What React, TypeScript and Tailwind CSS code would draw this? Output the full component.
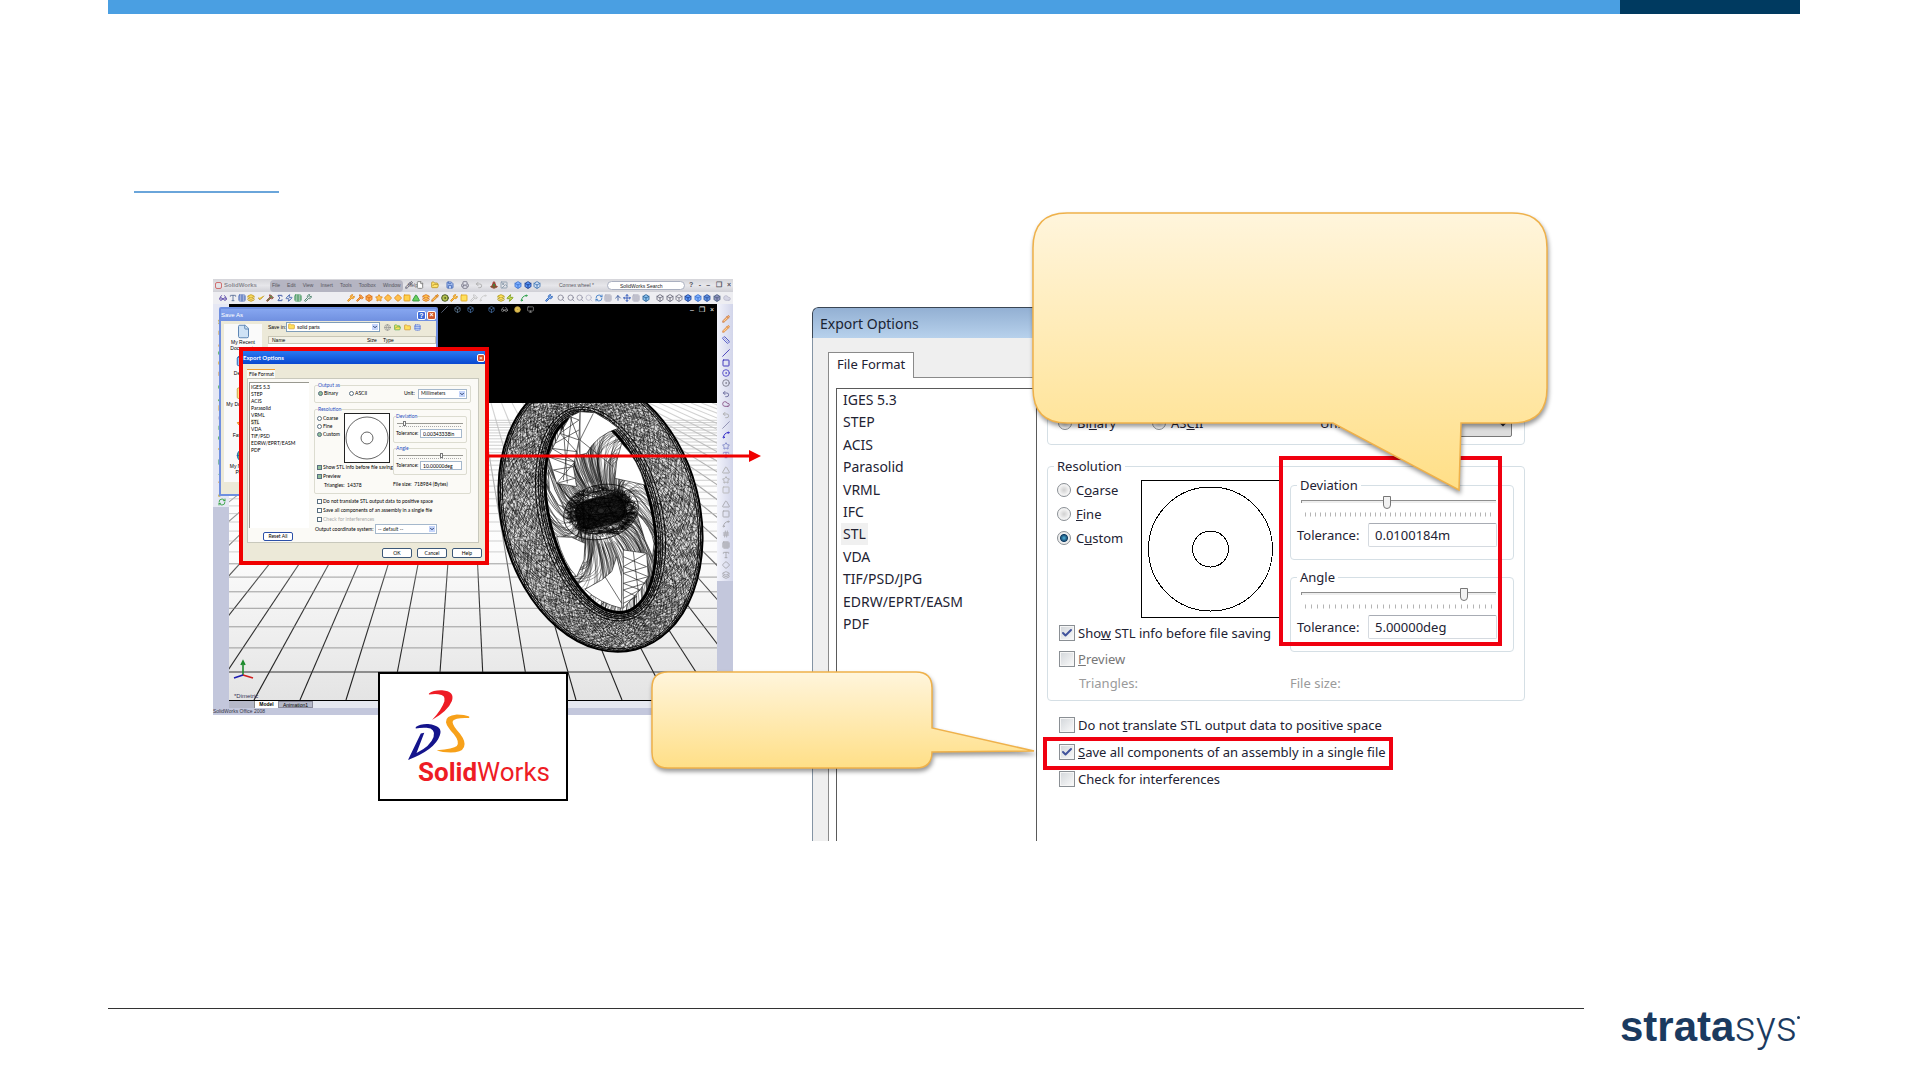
import React from 'react';
import {
  ArrowUp, Box, Check, ChevronDown, Circle, CircleDot, Cloud, Diamond, File, Folder, FolderOpen, Globe, Grid3x3, Glasses,
  Hammer, Hash, Image, Layers, Monitor, Move, Pencil, Printer, RefreshCw, Ruler, Save, Search, Sigma, Slash,
  Spline, Square, Star, Table, TrafficCone, Triangle, Type, Undo2, Wrench, Zap,
} from 'lucide-react';
import type { LucideIcon } from 'lucide-react';

type Tool = { icon: LucideIcon; at: number; color: string; fill?: string };

const formats = ['IGES 5.3', 'STEP', 'ACIS', 'Parasolid', 'VRML', 'IFC', 'STL', 'VDA', 'TIF/PSD/JPG', 'EDRW/EPRT/EASM', 'PDF'];
const oldFormats = ['IGES 5.3', 'STEP', 'ACIS', 'Parasolid', 'VRML', 'STL', 'VDA', 'TIF/PSD', 'EDRW/EPRT/EASM', 'PDF'];
const menus = ['File', 'Edit', 'View', 'Insert', 'Tools', 'Toolbox', 'Window', 'Help'];

const menuTools: Tool[] = [
  { icon: Pencil, at: 192, color: '#555566' },
  { icon: File, at: 203, color: '#777777', fill: '#ffffff' },
  { icon: FolderOpen, at: 218, color: '#b8952a', fill: '#ffe36b' },
  { icon: Save, at: 233, color: '#3b62b5', fill: '#b8cdf5' },
  { icon: Printer, at: 248, color: '#777788', fill: '#e5e5ee' },
  { icon: Undo2, at: 262, color: '#aaaaaa' },
  { icon: TrafficCone, at: 277, color: '#b03030', fill: '#3b8a3b' },
  { icon: Image, at: 287, color: '#8899aa' },
  { icon: Box, at: 301, color: '#3f74d1', fill: '#7eb0ff' },
  { icon: Box, at: 311, color: '#1d3f91', fill: '#5a95f5' },
  { icon: Box, at: 320, color: '#3f74b1', fill: '#cfdff5' },
];

const featureTools: Tool[] = [
  { icon: Glasses, at: 6, color: '#5d4aa8' },
  { icon: Type, at: 16, color: '#5b6f95' },
  { icon: Table, at: 25, color: '#3f62b5' },
  { icon: Layers, at: 34, color: '#c49a1c', fill: '#f5d860' },
  { icon: Check, at: 44, color: '#a47c10', fill: '#ffd94d' },
  { icon: Hammer, at: 53, color: '#a83a3a', fill: '#55a055' },
  { icon: Sigma, at: 63, color: '#29469c' },
  { icon: Zap, at: 72, color: '#3a5caa' },
  { icon: Table, at: 81, color: '#2f8f4a' },
  { icon: Wrench, at: 91, color: '#3d7a60' },
  { icon: Wrench, at: 134, color: '#e08a1c', fill: '#ffc04d' },
  { icon: Hammer, at: 143, color: '#d8731c', fill: '#ffa84d' },
  { icon: Box, at: 152, color: '#d8731c', fill: '#ffa84d' },
  { icon: Star, at: 162, color: '#e08a1c', fill: '#ffc04d' },
  { icon: Diamond, at: 171, color: '#e08a1c', fill: '#ffc04d' },
  { icon: Diamond, at: 181, color: '#e08a1c', fill: '#ffc04d' },
  { icon: Square, at: 190, color: '#e09a1c', fill: '#ffd04d' },
  { icon: Triangle, at: 199, color: '#2c8f3a', fill: '#6ad060' },
  { icon: Layers, at: 209, color: '#d8731c', fill: '#ffc04d' },
  { icon: Pencil, at: 218, color: '#c8701c', fill: '#ffc04d' },
  { icon: CircleDot, at: 228, color: '#3a4a1c', fill: '#b5c050' },
  { icon: Wrench, at: 237, color: '#d8931c', fill: '#ffc04d' },
  { icon: Square, at: 247, color: '#e0a81c', fill: '#ffe05d' },
  { icon: Hammer, at: 257, color: '#c2c2c2' },
  { icon: Spline, at: 266, color: '#cccccc' },
  { icon: Layers, at: 284, color: '#b09a1c', fill: '#ffe05d' },
  { icon: Zap, at: 293, color: '#7a9a1c', fill: '#cce05d' },
  { icon: Spline, at: 307, color: '#209a3c' },
  { icon: Wrench, at: 332, color: '#2b62b5', fill: '#8bb2f0' },
  { icon: Search, at: 344, color: '#888899' },
  { icon: Search, at: 354, color: '#888899' },
  { icon: Search, at: 363, color: '#9999aa' },
  { icon: Search, at: 372, color: '#bbbbcc' },
  { icon: RefreshCw, at: 382, color: '#3a7ac5' },
  { icon: Grid3x3, at: 391, color: '#aaaabb' },
  { icon: ArrowUp, at: 401, color: '#335599' },
  { icon: Move, at: 410, color: '#2b52b5' },
  { icon: Grid3x3, at: 419, color: '#aaaabb' },
  { icon: Box, at: 429, color: '#2b6295', fill: '#8bc2f0' },
  { icon: Box, at: 443, color: '#666677' },
  { icon: Box, at: 453, color: '#666677' },
  { icon: Box, at: 462, color: '#777788' },
  { icon: Box, at: 471, color: '#1d3f91', fill: '#5a95f5' },
  { icon: Box, at: 481, color: '#3f74d1', fill: '#7eb0ff' },
  { icon: Box, at: 490, color: '#2f54a1', fill: '#5e90df' },
  { icon: Box, at: 500, color: '#4f6481', fill: '#8e90bf' },
  { icon: Cloud, at: 510, color: '#bbbbcc', fill: '#d5d5e5' },
];

const leftTools: Tool[] = [
  { icon: Layers, at: 14, color: '#b0921c', fill: '#ffe05d' },
  { icon: Box, at: 25, color: '#c8901c', fill: '#ffe05d' },
  { icon: Pencil, at: 35, color: '#d89a3c' },
  { icon: CircleDot, at: 45, color: '#2c9f3a', fill: '#8ae070' },
  { icon: Circle, at: 55, color: '#d8a01c', fill: '#ffe88d' },
  { icon: Box, at: 66, color: '#c8801c', fill: '#ffc870' },
  { icon: CircleDot, at: 79, color: '#2c9f3a', fill: '#8ae070' },
  { icon: Triangle, at: 90, color: '#2c9f3a', fill: '#e0e070' },
  { icon: Square, at: 100, color: '#d8a01c', fill: '#ffe05d' },
  { icon: Circle, at: 110, color: '#aaaacc' },
  { icon: Box, at: 120, color: '#2c9f3a', fill: '#e0e05d' },
  { icon: Circle, at: 130, color: '#2c9f3a', fill: '#5ac060' },
  { icon: Diamond, at: 141, color: '#d8a01c', fill: '#a0e05d' },
  { icon: Grid3x3, at: 154, color: '#2c8f6a' },
  { icon: Spline, at: 164, color: '#2c9f3a' },
  { icon: Star, at: 175, color: '#d8801c', fill: '#ffe05d' },
  { icon: Pencil, at: 185, color: '#b8a01c', fill: '#ffe05d' },
  { icon: RefreshCw, at: 194, color: '#2c9f3a' },
];

const rightTools: Tool[] = [
  { icon: Pencil, at: 11, color: '#c8703c', fill: '#ffd08d' },
  { icon: Pencil, at: 21, color: '#d8803c', fill: '#ffd08d' },
  { icon: Ruler, at: 32, color: '#4a52c5' },
  { icon: Slash, at: 45, color: '#3a32b5' },
  { icon: Square, at: 55, color: '#2a22b5' },
  { icon: CircleDot, at: 65, color: '#4a42c5' },
  { icon: CircleDot, at: 75, color: '#777788' },
  { icon: Undo2, at: 86, color: '#666699' },
  { icon: Cloud, at: 96, color: '#885588' },
  { icon: Undo2, at: 107, color: '#aaaaaa' },
  { icon: Slash, at: 117, color: '#8888aa' },
  { icon: Spline, at: 127, color: '#2a22c5' },
  { icon: Star, at: 138, color: '#7a82c5' },
  { icon: Type, at: 147, color: '#8a82c5' },
  { icon: Triangle, at: 162, color: '#aaaaaa' },
  { icon: Star, at: 172, color: '#aaaaaa' },
  { icon: Square, at: 182, color: '#b5b5b5' },
  { icon: Triangle, at: 196, color: '#a5a5aa' },
  { icon: Square, at: 206, color: '#a5a5aa' },
  { icon: Spline, at: 216, color: '#a5a5aa' },
  { icon: Hash, at: 226, color: '#a5a5aa' },
  { icon: Grid3x3, at: 237, color: '#a5a5aa' },
  { icon: Type, at: 247, color: '#a5a5aa' },
  { icon: Diamond, at: 257, color: '#a5a5aa' },
  { icon: Layers, at: 267, color: '#a5a5aa' },
];

// floor lines meet in one vanishing point above the viewport
const floorRays = Array.from({ length: 81 }, (_, i) => i - 40);
const floorRows = Array.from({ length: 34 }, (_, n) => 1 / (0.002801 + 0.000203 * n) - 88);

const random = (seed: number) => () => {
  seed = (seed * 16807) % 2147483647;
  return seed / 2147483647;
};

const onTilt = (rx: number, ry: number, t: number) => {
  const a = (-14.5 * Math.PI) / 180;
  const x = rx * Math.cos(t);
  const y = ry * Math.sin(t);
  return [371.5 + x * Math.cos(a) - y * Math.sin(a), 111 + x * Math.sin(a) + y * Math.cos(a)];
};

const tireMesh = (seed: number, lean: number) => {
  const next = random(seed);
  const rings = 15;
  const steps = 210;
  let d = '';
  for (let r = 0; r < rings; r++) {
    const f = r / rings;
    const g = (r + 1.3) / (rings + 0.3);
    for (let s = 0; s < steps; s++) {
      const t = ((s + next() * 0.8) / steps) * Math.PI * 2;
      const u = t + lean * next();
      const [x1, y1] = onTilt(51 + 48 * f, 101 + 39 * f, t);
      const [x2, y2] = onTilt(51 + 48 * g, 101 + 39 * g, u);
      d += `M${x1.toFixed(1)} ${y1.toFixed(1)}L${x2.toFixed(1)} ${y2.toFixed(1)}`;
    }
  }
  return d;
};

const spokeMesh = () => {
  const next = random(23);
  let d = '';
  for (let s = 0; s < 380; s++) {
    const t = next() * Math.PI * 2;
    const [x1, y1] = onTilt(18 + next() * 10, 20 + next() * 14, t);
    const [x2, y2] = onTilt(51, 101, t + (next() - 0.2) * 0.7);
    const [qx, qy] = onTilt(38, 70, t - 0.25);
    d += `M${x1.toFixed(1)} ${y1.toFixed(1)}Q${qx.toFixed(1)} ${qy.toFixed(1)} ${x2.toFixed(1)} ${y2.toFixed(1)}`;
  }
  return d;
};

const hubMesh = () => {
  const next = random(41);
  let d = '';
  for (let s = 0; s < 170; s++) {
    const a = next() * Math.PI * 2;
    const b = a + 1 + next() * 2;
    d += `M${(372 + Math.cos(a) * 36).toFixed(1)} ${(108 + Math.sin(a) * 26).toFixed(1)}L${(372 + Math.cos(b) * 34).toFixed(1)} ${(108 + Math.sin(b) * 24).toFixed(1)}`;
  }
  return d;
};

const Tools: React.FC<{ items: Tool[]; vertical?: boolean; className: string }> = ({ items, vertical, className }) => (
  <svg className={className} aria-hidden="true">
    {items.map(({ icon: Icon, at, color, fill }, i) => (
      <Icon key={i} x={vertical ? 5 : at} y={vertical ? at : 2} width={8} height={8} color={color} fill={fill || 'none'} strokeWidth={2.6} />
    ))}
  </svg>
);

const Wheel: React.FC = () => (
  <svg viewBox="0 0 488 297" className="h-[297px] w-[488px]" aria-hidden="true">
    <defs>
      <linearGradient id="floor" x1="0" y1="0" x2="0" y2="1">
        <stop offset="0" stopColor="#ffffff" />
        <stop offset="0.5" stopColor="#fcfcfc" />
        <stop offset="1" stopColor="#e4e4e4" />
      </linearGradient>
      <linearGradient id="ray" gradientUnits="userSpaceOnUse" x1="0" y1="0" x2="0" y2="297">
        <stop offset="0" stopColor="#d8d8d8" />
        <stop offset="0.45" stopColor="#8a8a8a" />
        <stop offset="0.65" stopColor="#3a3a3a" />
        <stop offset="1" stopColor="#1c1c1c" />
      </linearGradient>
    </defs>
    <rect width="488" height="297" fill="url(#floor)" />
    {floorRays.map(k => (
      <line key={k} x1={241 + k * 10.52} y1="0" x2={255 + k * 46} y2="297" stroke="url(#ray)" strokeWidth="1.1" />
    ))}
    {floorRows.map((y, n) => (
      <path key={n} d={`M0 ${y.toFixed(1)}H488`} stroke={n < 1 ? '#333333' : n < 7 ? '#777777' : '#bbbbbb'} strokeWidth={n < 1 ? 1 : 0.7} />
    ))}
    <g transform="rotate(-14.5 371.5 111)">
      <ellipse cx="371.5" cy="111" rx="99" ry="140" fill="#dcdcdc" stroke="#000000" strokeWidth="2" />
      <ellipse cx="371.5" cy="111" rx="51" ry="101" fill="#ffffff" stroke="#000000" strokeWidth="3" />
      {[54, 56, 58, 61, 95, 97].map(r => (
        <ellipse key={r} cx="371.5" cy="111" rx={r} ry={60 + r * 0.81} fill="none" stroke="#111111" strokeWidth="0.9" />
      ))}
    </g>
    <path d={tireMesh(7, 0.09)} stroke="#000000" strokeWidth="0.45" fill="none" />
    <path d={tireMesh(19, -0.09)} stroke="#000000" strokeWidth="0.45" fill="none" />
    <path d={spokeMesh()} stroke="#000000" strokeWidth="0.35" fill="none" />
    <g transform="translate(251 -13) scale(0.3333)" stroke="#222222" strokeWidth="2" fill="#ffffff">
      <path d="M300 65L345 68L385 92L415 115Q350 135 320 190L300 195Z" />
      <path d="M425 160Q475 210 495 285L450 275L405 265L410 215Z" />
      <path d="M470 370Q515 410 522 460L518 500L495 450Z" />
      <path d="M230 440L275 442L315 460L312 510L290 560Q250 520 230 440Z" />
      <path d="M410 500L425 560V655Q360 640 315 598L365 570L395 545Z" />
      <path d="M205 240L225 300L250 350L235 345L208 300Z" />
      <path d="M270 80L300 65L297 150L280 230L290 290L230 280L205 200L240 130Z" />
      <path d="M430 480L500 490L505 560L480 600L430 655Z" />
      <path
        d="M240 130L297 90L270 80L297 150L240 130L290 185L215 175L283 215L205 200L280 230L220 240L285 265L230 280L285 215M250 110L262 280M275 80L250 270M297 120L225 160M430 500L500 530L430 550L495 580L430 600L470 620L430 640M500 490L430 530L505 560L430 580L480 600L430 625M460 485L475 605M340 70L300 150L400 230M375 560L425 640"
        fill="none"
      />
    </g>
    <path d={hubMesh()} stroke="#000000" strokeWidth="0.4" fill="none" />
    <g transform="rotate(-15 372 109)" fill="none" stroke="#111111" strokeWidth="0.8">
      <ellipse cx="372" cy="109" rx="38" ry="27" />
      <ellipse cx="372" cy="109" rx="31" ry="21" />
      <rect x="346" y="94" width="51" height="29" rx="12" fill="#000000" fillOpacity="0.85" />
    </g>
    <g strokeWidth="1.6" fill="none">
      <path d="M14 272V259M12 262L14 258L16 262" stroke="#1c8a2c" />
      <path d="M14 272L24 275" stroke="#d02020" />
      <path d="M14 272L5 275" stroke="#1c1cb0" />
    </g>
  </svg>
);

const OldSelect: React.FC<{ id: string; value: string; className: string }> = ({ id, value, className }) => (
  <span className={`relative ${className}`}>
    <select id={id} className="block h-[10px] w-full appearance-none border border-[#a5b8cc] bg-white pl-[2px] text-[#222222]"><option>{value}</option></select>
    <ChevronDown size={6} color="#2a4070" strokeWidth={4} className="pointer-events-none absolute top-[2px] right-[2px] bg-[#c5d5fb]" />
  </span>
);

const OldSlider: React.FC<{ title: string; value: string; pos: number }> = ({ title, value, pos }) => (
  <fieldset className="h-[30px] w-[74px] rounded-xs border border-[#dcdcd0]">
    <legend className="ml-[2px] leading-[7px] text-[#2a4fc0]">{title}</legend>
    <div className="relative mx-[3px] mt-px h-[5px]">
      <div className="h-px translate-y-[2px] bg-[#9a9a94]" />
      <input type="range" aria-label={title} defaultValue={pos} className="absolute inset-0 h-[5px] w-full appearance-none bg-transparent [&::-webkit-slider-thumb]:h-[5px] [&::-webkit-slider-thumb]:w-[3px] [&::-webkit-slider-thumb]:appearance-none [&::-webkit-slider-thumb]:border [&::-webkit-slider-thumb]:border-[#777777] [&::-webkit-slider-thumb]:bg-white" />
    </div>
    <div className="mx-[5px] border-t border-dotted border-[#aaaaaa]" />
    <label className="mt-[2px] flex items-center">
      <span className="w-[26px] pl-[2px]">Tolerance:</span>
      <input type="text" defaultValue={value} className="h-[9px] w-[42px] border border-[#a5b8cc] bg-white px-[2px]" />
    </label>
  </fieldset>
);

const OldChoice: React.FC<{ type: 'radio' | 'checkbox'; name?: string; label: string; checked?: boolean; className?: string }> = ({ type, name, label, checked, className = '' }) => (
  <label className={`flex items-center gap-px ${className}`}>
    <input
      type={type}
      name={name}
      defaultChecked={checked}
      className={`size-[5px] shrink-0 appearance-none border border-[#5a6f80] bg-white checked:bg-[#8fc09a] ${type === 'radio' ? 'rounded-full' : ''}`}
    />
    {label}
  </label>
);

const OldExportDialog: React.FC = () => (
  <div className="absolute top-[68px] left-[26px] flex h-[218px] w-[250px] flex-col border-4 border-[#f00000] bg-[#ece9d8] font-['Lato',sans-serif] text-[5px] leading-[7px] whitespace-nowrap text-black">
    <div className="flex h-[13px] items-center justify-between bg-gradient-to-b from-[#2a78f0] to-[#0a48d0] text-[6px] font-bold text-white">
      Export Options
      <button aria-label="Close" className="size-[8px] rounded-xs border border-white bg-[#d8502c] text-[6px] leading-[5px]">×</button>
    </div>
    <div className="mt-[5px] ml-[4px] h-[9px] w-[28px] border-t border-t-[#f0a030] bg-[#fbfaf6] pl-[2px] leading-[9px]">File Format</div>
    <div className="ml-[4px] flex h-[165px] w-[232px] border border-[#c8c8bc] bg-[#fbfaf6]">
      <div className="w-[61px] pt-[3px] pl-px">
        <ul className="h-[146px] border-t border-l border-[#999990] bg-white pt-px pl-px">
          {oldFormats.map(f => (
            <li key={f}><span className={f === 'STL' ? 'bg-[#ece9d8]' : ''}>{f}</span></li>
          ))}
        </ul>
        <button className="mt-[4px] ml-[14px] block h-[9px] w-[30px] rounded-xs border border-[#2c50a8] bg-white leading-[7px]">Reset All</button>
      </div>
      <div className="ml-[5px] w-[157px]">
        <fieldset className="mt-[3px] h-[21px] rounded-xs border border-[#dcdcd0]">
          <legend className="ml-[3px] leading-[7px] text-[#2a4fc0]">Output as</legend>
          <div className="flex h-[9px] items-center pl-[3px]">
            <OldChoice type="radio" name="oldOutput" label="Binary" checked className="w-[31px]" />
            <OldChoice type="radio" name="oldOutput" label="ASCII" className="w-[55px]" />
            <label htmlFor="oldUnit" className="w-[14px]">Unit:</label>
            <OldSelect id="oldUnit" value="Millimeters" className="w-[49px]" />
          </div>
        </fieldset>
        <fieldset className="mt-[3px] h-[88px] rounded-xs border border-[#dcdcd0]">
          <legend className="ml-[3px] leading-[7px] text-[#2a4fc0]">Resolution</legend>
          <div className="flex">
            <div className="w-[78px]">
              <div className="flex">
                <div className="w-[29px] pt-px pl-[2px] leading-[8px]">
                  <OldChoice type="radio" name="oldRes" label="Coarse" />
                  <OldChoice type="radio" name="oldRes" label="Fine" />
                  <OldChoice type="radio" name="oldRes" label="Custom" checked />
                </div>
                <svg viewBox="0 0 46 50" className="h-[50px] w-[46px] bg-white" fill="none" stroke="#222222" aria-hidden="true">
                  <rect x="0.5" y="0.5" width="45" height="49" />
                  <circle cx="23" cy="25" r="21" strokeWidth="0.7" />
                  <circle cx="23" cy="25" r="6" strokeWidth="0.7" />
                </svg>
              </div>
              <OldChoice type="checkbox" label="Show STL info before file saving" checked className="mt-px pl-[2px]" />
              <OldChoice type="checkbox" label="Preview" checked className="mt-[2px] pl-[2px]" />
              <p className="mt-[2px] pl-[9px]">Triangles:&nbsp; 14378</p>
            </div>
            <div>
              <OldSlider title="Deviation" value="0.00343338in" pos={10} />
              <div className="mt-[2px]"><OldSlider title="Angle" value="10.00000deg" pos={68} /></div>
              <p className="mt-[6px]">File size:&nbsp; 718984 (Bytes)</p>
            </div>
          </div>
        </fieldset>
        <div className="pt-[3px] pl-[3px] leading-[9px]">
          <OldChoice type="checkbox" label="Do not translate STL output data to positive space" />
          <OldChoice type="checkbox" label="Save all components of an assembly in a single file" />
          <OldChoice type="checkbox" label="Check for interferences" className="text-[#aaaaaa]" />
        </div>
        <div className="flex items-center pl-px">
          <label htmlFor="oldSystem" className="w-[60px]">Output coordinate system:</label>
          <OldSelect id="oldSystem" value="-- default --" className="w-[62px]" />
        </div>
      </div>
    </div>
    <div className="mt-[5px] flex justify-end gap-[5px] pr-[3px]">
      {['OK', 'Cancel', 'Help'].map(b => (
        <button key={b} className="h-[10px] w-[30px] rounded-xs border border-[#3c5878] bg-white">{b}</button>
      ))}
    </div>
  </div>
);

const places: { icon: LucideIcon; label: string; color: string; fill: string }[] = [
  { icon: File, label: 'My Recent Documents', color: '#5580b0', fill: '#cfe2f5' },
  { icon: Monitor, label: 'Desktop', color: '#2060b0', fill: '#9cc8f5' },
  { icon: Folder, label: 'My Documents', color: '#c8a040', fill: '#ffe08d' },
  { icon: Star, label: 'Favorites', color: '#e08020', fill: '#ffc04d' },
  { icon: Globe, label: 'My Network Places', color: '#2060b0', fill: '#60b070' },
];

const SaveAsDialog: React.FC = () => (
  <div className="absolute top-[28px] left-[6px] h-[189px] w-[219px] overflow-hidden rounded-t-xs border-2 border-[#6f8fe0] bg-[#ece9d8] text-[5px] leading-[6px]">
    <div className="flex h-[12px] items-center gap-px bg-gradient-to-b from-[#86a6f0] to-[#7090e0] text-[6px] text-white">
      <span className="grow">Save As</span>
      <button className="size-[9px] rounded-xs border border-white bg-[#3c68d8] text-[7px] leading-[7px] font-bold">?</button>
      <button aria-label="Close" className="size-[9px] rounded-xs border border-white bg-[#d0582c] text-[7px] leading-[6px] font-bold">×</button>
    </div>
    <div className="flex">
      <div className="mt-[3px] ml-[3px] h-[158px] w-[38px] bg-[#fafafa] text-center">
        {places.map(({ icon: Icon, label, color, fill }) => (
          <div key={label} className="flex h-[31px] flex-col items-center">
            <Icon size={15} color={color} fill={fill} strokeWidth={1.5} className="shrink-0" />
            <span>{label}</span>
          </div>
        ))}
      </div>
      <div className="grow pt-px pl-[6px]">
        <div className="flex items-center">
          <label htmlFor="folder" className="w-[18px] shrink-0 whitespace-nowrap">Save in:</label>
          <span className="relative w-[94px]">
            <select id="folder" className="block h-[10px] w-full appearance-none border border-[#7f9db9] bg-white pl-[10px] text-[5px]"><option>solid parts</option></select>
            <Folder size={7} color="#c8901c" fill="#ffe05d" className="pointer-events-none absolute top-px left-[2px]" />
            <ChevronDown size={6} color="#2a4070" strokeWidth={4} className="pointer-events-none absolute top-[2px] right-[2px] bg-[#c5d5fb]" />
          </span>
          <Globe size={7} color="#888888" className="ml-[4px]" />
          <FolderOpen size={7} color="#2c9f3a" fill="#ffe05d" className="ml-[3px]" />
          <Folder size={7} color="#c8801c" fill="#ffe05d" className="ml-[3px]" />
          <Table size={7} color="#3f62d5" fill="#cfdff5" className="ml-[3px]" />
        </div>
        <div className="mt-[4px] flex h-[8px] items-center border border-[#c8c5b4] bg-[#f3f1e6]">
          <span className="w-[98px] pl-[3px]">Name</span>
          <span className="w-[16px]">Size</span>
          <span>Type</span>
        </div>
        <div className="h-[140px] bg-white" />
      </div>
    </div>
  </div>
);

const SolidWorksWindow: React.FC = () => (
  <div className="relative mt-[66px] ml-[105px] h-[436px] w-[520px] shrink-0 bg-[#c3c7dc] font-['Liberation_Sans',sans-serif]">
    <div className="flex h-[13px] items-center bg-gradient-to-b from-[#d5d5da] via-[#e6e6ea] to-[#cfcfd6] text-[5px] text-[#555560]">
      <span className="ml-[2px] size-[7px] rounded-xs border border-[#d07070]" />
      <span className="ml-[2px] w-[46px] text-[6px] font-bold text-[#88888f]">SolidWorks</span>
      <nav className="flex h-[12px] w-[133px] items-center gap-[7px] rounded-sm bg-[#b5b5c2] pl-[2px] whitespace-nowrap">
        {menus.map(m => <span key={m}>{m}</span>)}
      </nav>
      <span className="ml-[156px] w-[48px] whitespace-nowrap">Connex wheel *</span>
      <input type="text" aria-label="Search" defaultValue="SolidWorks Search" className="h-[9px] w-[78px] rounded-full border border-[#aab0c0] bg-white pl-[12px] text-[#222222]" />
      <span className="ml-[4px] flex grow justify-between pr-[2px] text-[7px] font-bold"><span>?</span><span>-</span><span>–</span><span>❐</span><span>×</span></span>
    </div>
    <Tools items={menuTools} className="absolute top-0 left-0 h-[13px] w-[400px]" />
    <Tools items={featureTools} className="h-[12px] w-[520px] bg-[#eeeef2]" />
    <div className="flex h-[396px]">
      <div className="w-[16px]">
        <Tools items={leftTools} vertical className="h-[203px] w-[16px] bg-[#e6e8f4]" />
      </div>
      <div className="w-[488px]">
        <div className="flex h-[99px] items-start bg-black pt-[2px] pr-[3px]">
          <div className="ml-[212px] flex grow gap-[6px]">
            <Slash size={7} color="#8899bb" />
            <Box size={7} color="#7799bb" />
            <Box size={7} color="#5588cc" />
            <Box size={7} color="#5588cc" className="ml-[8px]" />
            <Glasses size={7} color="#aaaaaa" />
            <CircleDot size={7} color="#b09040" fill="#e0c050" />
            <Monitor size={7} color="#aaaaaa" />
          </div>
          <span className="flex gap-[5px] text-[7px] leading-[8px] text-white"><span>–</span><span>❐</span><span>×</span></span>
        </div>
        <div className="relative">
          <Wheel />
          <span className="absolute bottom-0 left-[5px] text-[6px] leading-[8px] text-[#333355]">*Dimetric</span>
        </div>
      </div>
      <div className="w-[16px]">
        <Tools items={rightTools} vertical className="h-[277px] w-[16px] bg-gradient-to-r from-[#f2f3fb] to-[#d2d5ea]" />
      </div>
    </div>
    <div className="ml-[16px] flex h-[8px] w-[488px] border-t border-black bg-[#e6e8f0] text-[5px] leading-[7px]">
      <span className="w-[26px] border-r border-[#888888] bg-[#b5b8c8]" />
      <span className="w-[23px] bg-white text-center font-bold">Model</span>
      <span className="w-[35px] border border-[#8a8a9a] bg-[#b5b8c8] text-center leading-[6px]">Animation1</span>
    </div>
    <p className="text-[5px] leading-[7px] text-[#333344]">SolidWorks Office 2008</p>
    <SaveAsDialog />
    <OldExportDialog />
  </div>
);

const Choice: React.FC<{ type: 'radio' | 'checkbox'; name?: string; checked?: boolean; className?: string; children: React.ReactNode }> = ({ type, name, checked, className = '', children }) => (
  <label className={`flex items-center whitespace-nowrap ${className}`}>
    {type === 'radio' ? (
      <input type="radio" name={name} defaultChecked={checked} className="mr-[5px] size-[14px] appearance-none rounded-full border border-[#8a8f94] bg-[radial-gradient(circle,#d0d0d0_0%,#f4f4f4_60%)] checked:bg-[radial-gradient(circle,#4fb4dc_0%,#123f66_42%,#eeeeee_52%)]" />
    ) : (
      <span className="relative mr-[3px] size-[16px]">
        <input type="checkbox" defaultChecked={checked} className="peer block size-[16px] appearance-none border border-[#8a8f94] bg-gradient-to-br from-[#d2d6da] to-[#fbfbfb] shadow-[inset_0_0_0_1px_#f6f6f6]" />
        <Check size={12} color="#41539c" strokeWidth={4} className="pointer-events-none absolute top-[2px] left-[2px] hidden peer-checked:block" />
      </span>
    )}
    <span>{children}</span>
  </label>
);

const ToleranceGroup: React.FC<{ title: string; value: string; pos: number; dash: string }> = ({ title, value, pos, dash }) => (
  <fieldset className="h-[84px] w-[224px] rounded-sm border border-[#d5dfe5]">
    <legend className="ml-[6px] px-[3px]">{title}</legend>
    <div className="relative mt-px ml-[10px] h-[14px] w-[195px]">
      <div className="h-[3px] translate-y-[5px] border-t border-l border-[#8e8e8e] bg-[#eeeeee]" />
      <input type="range" aria-label={title} defaultValue={pos} className="absolute inset-0 h-[14px] w-full appearance-none bg-transparent [&::-webkit-slider-thumb]:h-[13px] [&::-webkit-slider-thumb]:w-[8px] [&::-webkit-slider-thumb]:appearance-none [&::-webkit-slider-thumb]:rounded-b-sm [&::-webkit-slider-thumb]:border [&::-webkit-slider-thumb]:border-[#777777] [&::-webkit-slider-thumb]:bg-[#f2f2f2]" />
    </div>
    <svg className="mt-[3px] ml-[13px] h-[5px] w-[190px]" aria-hidden="true">
      <line x1="1" x2="190" y1="2.5" y2="2.5" stroke="#b4b4b4" strokeWidth="4" strokeDasharray={dash} />
    </svg>
    <label className="mt-[6px] flex items-center pl-[6px]">
      <span className="w-[71px]">Tolerance:</span>
      <input type="text" defaultValue={value} className="h-[24px] w-[129px] rounded-xs border border-[#d5dae0] border-t-[#a8acb4] bg-white px-[6px]" />
    </label>
  </fieldset>
);

const ExportDialog: React.FC = () => (
  <div className="mt-[94px] ml-[79px] flex h-[534px] w-[720px] shrink-0 flex-col overflow-hidden rounded-tl-md font-['Noto_Sans',sans-serif] text-[13px] leading-[18px] text-[#222233]">
    <div className="h-[31px] rounded-tl-md border-t border-l border-[#3a4654] bg-gradient-to-b from-[#93b0d3] to-[#b7d1ec] pt-[7px] pl-[7px] text-[14px] text-[#1a2433]">Export Options</div>
    <div className="flex grow flex-col border-l border-[#8494a4] bg-[#efefef] pt-[14px] pl-[15px]">
      <div className="relative z-10 -mb-px h-[26px] w-[86px] border border-b-0 border-[#8a8a8a] bg-white pt-[2px] pl-[8px]">File Format</div>
      <div className="flex grow border-t border-l border-[#8a8a8a] bg-white">
        <div className="mt-[10px] ml-[7px] w-[201px] shrink-0 border border-b-0 border-[#5a5a5a]">
          <ul className="flex h-[246px] flex-col justify-between pl-[4px] text-[14px] leading-[22px]">
            {formats.map(f => (
              <li key={f}><span className={f === 'STL' ? 'inline-block bg-[#f0f0f0] px-[2px]' : 'px-[2px]'}>{f}</span></li>
            ))}
          </ul>
        </div>
        <div className="mt-[10px] ml-[10px] w-[478px] shrink-0">
          <fieldset className="h-[57px] rounded-sm border border-[#d5dfe5]">
            <legend className="ml-[7px] px-[3px]">Output as</legend>
            <div className="mt-[3px] flex items-center pl-[10px]">
              <Choice type="radio" name="output" className="w-[94px]">Bi<u>n</u>ary</Choice>
              <Choice type="radio" name="output" className="w-[168px]">AS<u>C</u>II</Choice>
              <label className="flex items-center gap-[10px]">
                <span>Unit:</span>
                <select className="h-[28px] w-[153px] rounded-xs border border-[#777777] bg-[#dddddd] px-[6px]"><option>Millimeters</option></select>
              </label>
            </div>
          </fieldset>
          <fieldset className="mt-[12px] h-[244px] rounded-sm border border-[#d5dfe5]">
            <legend className="ml-[6px] px-[3px]">Resolution</legend>
            <div className="flex">
              <div className="w-[242px]">
                <div className="flex h-[143px]">
                  <div className="w-[93px] pt-[3px] pl-[9px]">
                    <Choice type="radio" name="resolution" className="h-[24px]">C<u>o</u>arse</Choice>
                    <Choice type="radio" name="resolution" className="h-[24px]"><u>F</u>ine</Choice>
                    <Choice type="radio" name="resolution" checked className="h-[24px]">C<u>u</u>stom</Choice>
                  </div>
                  <svg viewBox="0 0 139 138" className="mt-[5px] h-[138px] w-[139px]" fill="none" stroke="#000000" aria-hidden="true">
                    <rect x="0.5" y="0.5" width="138" height="137" />
                    <circle cx="69.5" cy="69" r="62" shapeRendering="crispEdges" />
                    <circle cx="69.5" cy="69" r="18" shapeRendering="crispEdges" />
                  </svg>
                </div>
                <div className="pt-[2px] pl-[11px]">
                  <Choice type="checkbox" checked className="h-[26px]">Sho<u>w</u> STL info before file saving</Choice>
                  <Choice type="checkbox" className="h-[26px] text-[#777777]"><u>P</u>review</Choice>
                  <p className="pl-[20px] leading-[22px] text-[#9a9a9a]">Triangles:</p>
                </div>
              </div>
              <div className="pt-px">
                <ToleranceGroup title="Deviation" value="0.0100184m" pos={44} dash="1 4" />
                <div className="mt-[8px]"><ToleranceGroup title="Angle" value="5.00000deg" pos={85} dash="1 5" /></div>
                <p className="mt-[20px] leading-[22px] text-[#9a9a9a]">File size:</p>
              </div>
            </div>
          </fieldset>
          <div className="pt-[10px] pl-[12px]">
            <Choice type="checkbox" className="h-[27px]">Do not <u>t</u>ranslate STL output data to positive space</Choice>
            <Choice type="checkbox" checked className="h-[27px]"><u>S</u>ave all components of an assembly in a single file</Choice>
            <Choice type="checkbox" className="h-[27px]">Check for interferences</Choice>
          </div>
        </div>
      </div>
    </div>
  </div>
);

const Callouts: React.FC = () => (
  <>
    <svg viewBox="0 0 516 278" className="absolute top-0 left-[924px] h-[278px] w-[516px] overflow-visible drop-shadow-[1px_3px_2px_rgba(0,0,0,0.4)]" aria-hidden="true">
      <defs>
        <linearGradient id="sand" x1="0" y1="0" x2="0" y2="1">
          <stop offset="0" stopColor="#fff5dc" />
          <stop offset="1" stopColor="#ffdf87" />
        </linearGradient>
      </defs>
      <path d="M35 0H480Q515 0 515 35V175Q515 210 480 210H429L427 277L301 210H35Q1 210 1 175V35Q1 0 35 0Z" fill="url(#sand)" stroke="#efb14a" strokeWidth="1.5" />
    </svg>
    <svg viewBox="0 0 384 97" className="absolute top-[459px] left-[543px] h-[97px] w-[384px] overflow-visible drop-shadow-[1px_3px_2px_rgba(0,0,0,0.4)]" aria-hidden="true">
      <path d="M17 0H265Q281 0 281 16V56L383 79L281 80V80Q281 96 265 96H17Q1 96 1 80V16Q1 0 17 0Z" fill="url(#sand)" stroke="#efb14a" strokeWidth="1.5" />
    </svg>
  </>
);

const SolidWorksLogo: React.FC = () => (
  <div className="absolute top-[459px] left-[270px] h-[129px] w-[190px] border-2 border-black bg-white text-[#ee1c25]">
    <svg viewBox="0 0 160 200" className="mt-[16px] ml-[28px] h-[70px] w-[62px]" preserveAspectRatio="none" aria-hidden="true">
      <path d="M54 10Q66 0 88 1Q122 4 113 32Q104 58 62 86Q88 54 94 32Q98 14 78 12Q66 11 54 13Z" fill="#ee1c25" />
      <path d="M20 106Q32 96 52 97Q92 102 82 130Q70 170 0 200L33 124L42 122L22 180Q58 160 66 134Q72 110 48 108Q34 107 20 110Z" fill="#14148c" />
      <path d="M158 76Q146 70 126 70Q96 74 98 92Q100 104 118 126Q134 148 126 160Q118 168 74 172Q92 180 122 178Q146 174 146 154Q146 138 126 114Q112 96 116 88Q122 78 158 80Z" fill="#f7a11a" />
    </svg>
    <p className="pl-[38px] font-['Roboto',sans-serif] text-[26px] leading-[24px] whitespace-nowrap"><b>Solid</b>Works</p>
  </div>
);

const App: React.FC = () => (
  <div className="flex min-h-screen flex-col overflow-hidden bg-white pr-[120px] pb-7 pl-[108px]">
    <header>
      <div className="flex h-[14px]">
        <div className="grow bg-[#4a9fe2]" />
        <div className="w-[180px] bg-[#003a60]" />
      </div>
      <div className="mt-[177px] ml-[26px] h-[2px] w-[145px] bg-[#6aa5da]" />
    </header>

    <main className="relative mt-[20px] flex items-start">
      <SolidWorksWindow />
      <ExportDialog />
      <div className="absolute top-[243px] left-[1171px] h-[190px] w-[223px] border-4 border-[#f00010]" />
      <Callouts />
      <div className="absolute top-[524px] left-[935px] h-[33px] w-[350px] border-4 border-[#f00010]" />
      <svg viewBox="0 0 272 12" className="absolute top-[237px] left-[381px] h-[12px] w-[272px]" aria-hidden="true">
        <path d="M0 6H262" stroke="#f00000" strokeWidth="3" />
        <path d="M260 0L272 6L260 12Z" fill="#f00000" />
      </svg>
      <SolidWorksLogo />
    </main>

    <footer className="mt-auto flex items-start gap-9">
      <div className="mt-[6px] h-px grow bg-[#333333]" />
      <div className="relative flex w-[180px] items-start text-[42px] leading-[50px] whitespace-nowrap text-[#1b3a5f]">
        <span className="font-['Liberation_Sans',sans-serif] font-bold">strata</span>
        <span className="font-['Roboto',sans-serif] font-light">sys</span>
        <i className="absolute top-[14px] right-0 size-[3px] rounded-full bg-[#1b3a5f]" />
      </div>
    </footer>
  </div>
);

export default App;
